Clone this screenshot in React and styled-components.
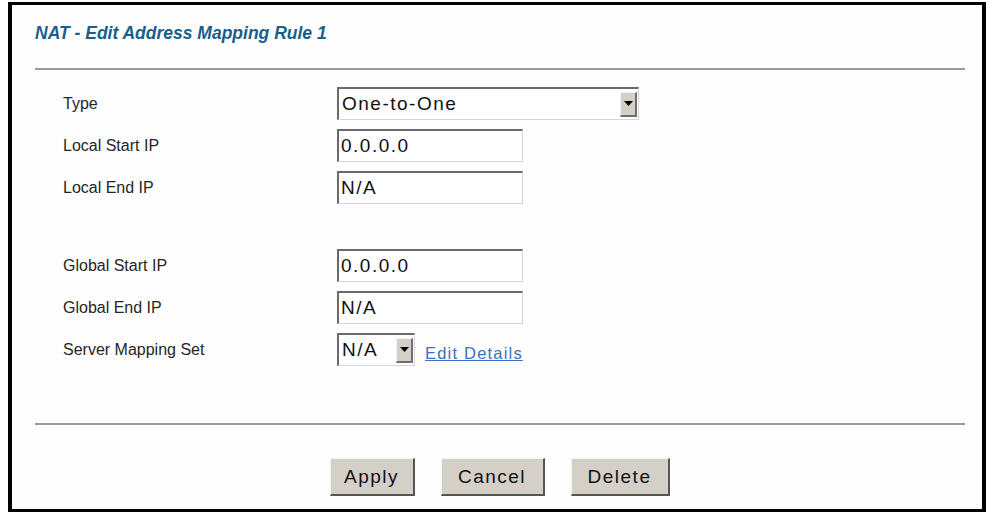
import React from 'react';
import styled, { createGlobalStyle } from 'styled-components';

const GlobalStyle = createGlobalStyle`
  html, body {
    margin: 0;
    padding: 0;
    background: #fff;
  }
  body {
    font-family: "Liberation Sans", Arial, sans-serif;
    color: #1e1e1e;
  }
`

const Frame = styled.div`
  box-sizing: border-box;
  margin: 2px 0 0 8px;
  width: 978px;
  height: 510px;
  border-style: solid;
  border-color: #000;
  border-width: 3px 4px 3px 4px;
  background: #fefefe;
  padding: 17px 17px 0 23px;
  display: flex;
  flex-direction: column;
`

const Title = styled.h1`
  margin: 0;
  font-size: 17.5px;
  line-height: 22px;
  font-weight: bold;
  font-style: italic;
  color: #1a5f8b;
`

const Rule = styled.div`
  height: 2px;
  background: #9a9a9a;
  margin-top: ${p => p.top}px;
`

const Form = styled.div`
  display: grid;
  grid-template-columns: 274px 1fr;
  row-gap: 9px;
  align-items: center;
  padding-left: 28px;
  margin-top: 17px;
`

const Label = styled.div`
  font-size: 16px;
  color: #262626;
`

const Spacer = styled.div`
  grid-column: 1 / 3;
  height: 27px;
`

const Field = styled.div`
  display: flex;
  align-items: center;
  gap: 10px;
`

const TextBox = styled.div`
  box-sizing: border-box;
  width: ${p => p.w}px;
  height: 33px;
  border-style: solid;
  border-width: 2px 1px 1px 2px;
  border-color: #6a6a6a #d6d6d6 #d6d6d6 #6a6a6a;
  background: #fff;
  font-size: 19px;
  letter-spacing: 1.5px;
  line-height: 29px;
  padding-left: 2px;
  color: #111;
`

const Select = styled.div`
  box-sizing: border-box;
  width: ${p => p.w}px;
  height: 33px;
  display: flex;
  align-items: center;
  justify-content: space-between;
  border-style: solid;
  border-width: 2px 1px 1px 2px;
  border-color: #6a6a6a #d6d6d6 #d6d6d6 #6a6a6a;
  background: #fff;
  font-size: 19px;
  letter-spacing: 1.5px;
  padding-left: 3px;
  padding-right: 1px;
  color: #111;
`

const ArrowBtn = styled.div`
  box-sizing: border-box;
  width: 17px;
  height: 25px;
  background: #d4d0c8;
  border-style: solid;
  border-width: 1px 2px 2px 1px;
  border-color: #f2f2f2 #6e6e6e #6e6e6e #f2f2f2;
  display: flex;
  align-items: center;
  justify-content: center;
`

const Link = styled.a`
  font-size: 16.5px;
  letter-spacing: 1.2px;
  color: #3b6fc6;
  text-decoration: underline;
  margin-top: 8px;
`

const ButtonBar = styled.div`
  display: flex;
  justify-content: center;
  gap: 26px;
  margin-top: 33px;
  padding-right: 1px;
`

const Button = styled.button`
  box-sizing: border-box;
  width: ${p => p.w}px;
  height: 38px;
  background: #d4d0c8;
  font-family: "Liberation Sans", Arial, sans-serif;
  font-size: 19px;
  letter-spacing: 1.5px;
  color: #111;
  border-style: solid;
  border-width: 1px 2px 2px 1px;
  border-color: #f4f4f4 #555 #555 #f4f4f4;
  padding: 0;
`

const Arrow = () => (
  <svg width="9" height="5" viewBox="0 0 9 5">
    <path d="M0 0 H9 L4.5 5 Z" fill="#000" />
  </svg>
);

const App = () => {
  return (
    <>
      <GlobalStyle />
      <Frame>
        <Title>NAT - Edit Address Mapping Rule 1</Title>
        <Rule top={24} />
        <Form>
          <Label>Type</Label>
          <Field>
            <Select w={302}>
              <span>One-to-One</span>
              <ArrowBtn><Arrow /></ArrowBtn>
            </Select>
          </Field>

          <Label>Local Start IP</Label>
          <TextBox w={186}>0.0.0.0</TextBox>

          <Label>Local End IP</Label>
          <TextBox w={186}>N/A</TextBox>

          <Spacer />

          <Label>Global Start IP</Label>
          <TextBox w={186}>0.0.0.0</TextBox>

          <Label>Global End IP</Label>
          <TextBox w={186}>N/A</TextBox>

          <Label>Server Mapping Set</Label>
          <Field>
            <Select w={78}>
              <span>N/A</span>
              <ArrowBtn><Arrow /></ArrowBtn>
            </Select>
            <Link href="#">Edit Details</Link>
          </Field>
        </Form>
        <Rule top={57} />
        <ButtonBar>
          <Button w={85}>Apply</Button>
          <Button w={104}>Cancel</Button>
          <Button w={99}>Delete</Button>
        </ButtonBar>
      </Frame>
    </>
  );
};

export default App;
